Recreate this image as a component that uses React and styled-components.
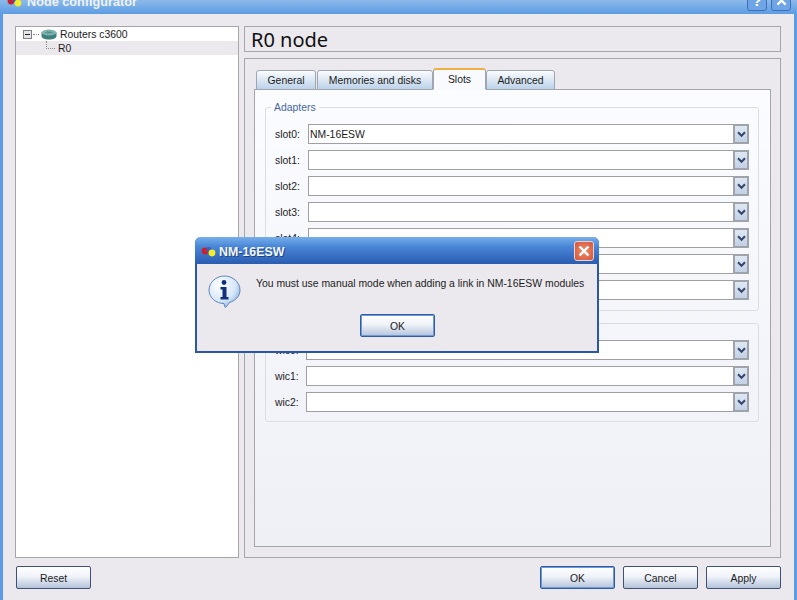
import React from 'react'
import styled, { createGlobalStyle } from 'styled-components'

const GlobalStyle = createGlobalStyle`
  html, body { margin: 0; padding: 0; background: #ebe9ed; }
  body { font-family: "Liberation Sans", Arial, sans-serif; font-size: 10.4px; color: #1c1c1c; }
`
const Window = styled.div`
  position: relative;
  width: 797px;
  height: 600px;
  overflow: hidden;
  display: flex;
  flex-direction: column;
  background: #ebe9ed;
`
const TitleBar = styled.div`
  height: 14px;
  flex: none;
  display: flex;
  align-items: flex-end;
  justify-content: space-between;
  overflow: hidden;
  padding: 0 6px 0 6px;
  background: linear-gradient(#8db9ea, #5b9ce4);
`
const TitleLeft = styled.div`
  display: flex;
  align-items: center;
  gap: 4px;
  height: 20px;
  margin-bottom: 2px;
`
const TitleText = styled.span`
  font-size: 12.7px;
  font-weight: 700;
  color: #eef3fa;
`
const TitleButtons = styled.div`
  display: flex;
  gap: 4px;
  margin-bottom: 3px;
`
const CaptionButton = styled.div`
  width: 20px;
  height: 20px;
  box-sizing: border-box;
  border: 1px solid #3f6fb5;
  border-radius: 3px;
  background: #6fa5e6;
  color: #fff;
  font-weight: bold;
  font-size: 15px;
  line-height: 18px;
  text-align: center;
`
const Frame = styled.div`
  flex: 1;
  display: flex;
  flex-direction: column;
  border-left: 3px solid #5b9ce4;
  border-right: 3px solid #5b9ce4;
  padding: 12px 13px 0 12px;
  min-height: 0;
`
const Main = styled.div`
  display: grid;
  grid-template-columns: 224px 537px;
  gap: 5px;
  height: 532px;
`
const Tree = styled.div`
  box-sizing: border-box;
  background: #fff;
  border: 1px solid #a6a6aa;
`
const TreeRow = styled.div`
  display: flex;
  align-items: center;
  height: 14px;
  padding-left: ${p => p.$indent}px;
  background: ${p => (p.$selected ? '#ebe9ed' : 'transparent')};
`
const Expander = styled.div`
  width: 9px;
  height: 9px;
  box-sizing: border-box;
  border: 1px solid #7c8088;
  background: #e6e6e6;
  display: flex;
  align-items: center;
  justify-content: center;
  &::after { content: ''; width: 5px; height: 1px; background: #222; }
`
const TreeDots = styled.div`
  width: 6px;
  border-top: 1px dotted #8a8a8a;
  margin: 0 2px 0 1px;
`
const ElbowDots = styled.div`
  width: 8px;
  height: 7px;
  margin: -7px 3px 0 0;
  border-left: 1px dotted #8a8a8a;
  border-bottom: 1px dotted #8a8a8a;
  flex: none;
`
const TreeLabel = styled.span`
  margin-left: ${p => p.$gap || 0}px;
`
const RightColumn = styled.div`
  display: flex;
  flex-direction: column;
  gap: 6px;
  min-height: 0;
`
const NodeHeading = styled.div`
  height: 26px;
  box-sizing: border-box;
  border: 1px solid #a6a6aa;
  padding-left: 6px;
  font-family: "Noto Sans", "Liberation Sans", sans-serif;
  font-size: 20px;
  line-height: 25px;
  color: #111;
`
const TabFrame = styled.div`
  flex: 1;
  box-sizing: border-box;
  border: 1px solid #a6a6aa;
  padding: 9px 9px 10px 9px;
  display: flex;
  flex-direction: column;
`
const TabBar = styled.div`
  display: flex;
  align-items: flex-end;
  height: 22px;
  padding-left: 2px;
  position: relative;
  z-index: 1;
  margin-bottom: -1px;
`
const Tab = styled.div`
  box-sizing: border-box;
  width: ${p => p.$width}px;
  height: ${p => (p.$active ? 22 : 20)}px;
  margin-right: ${p => p.$gap || 0}px;
  text-align: center;
  line-height: 19px;
  border: 1px solid #a0a6b0;
  border-radius: 3px 3px 0 0;
  background: linear-gradient(#fbfcfe, #bcd2e9);
  ${p => p.$active && `
    background: #f9fafe;
    border-top: 2px solid #eeb040;
    border-bottom: 1px solid #f9fafe;
  `}
`
const Pane = styled.div`
  flex: 1;
  box-sizing: border-box;
  border: 1px solid #a6a6aa;
  padding: 17px 11px 0 10px;
  background: linear-gradient(#fbfcff, #eff0f6);
  display: flex;
  flex-direction: column;
  gap: 12px;
`
const Group = styled.div`
  position: relative;
  box-sizing: border-box;
  border: 1px solid #dcdde3;
  border-radius: 3px;
  padding: 16px 9px ${p => p.$bottom}px 9px;
  display: flex;
  flex-direction: column;
  gap: 6px;
`
const GroupTitle = styled.span`
  position: absolute;
  top: -6px;
  left: 5px;
  padding: 0 3px;
  background: #fbfcff;
  color: #46679f;
`
const SlotRow = styled.div`
  display: flex;
  align-items: center;
  height: 20px;
`
const SlotLabel = styled.span`
  flex: none;
  width: ${p => p.$width}px;
  color: #222;
`
const Combo = styled.div`
  flex: 1;
  box-sizing: border-box;
  height: 20px;
  display: flex;
  background: #fff;
  border: 1px solid #a0a0a4;
  padding-left: 1px;
  line-height: 19px;
`
const ComboValue = styled.div`
  flex: 1;
`
const ComboArrow = styled.div`
  width: 16px;
  margin: -1px -1px -1px 0;
  box-sizing: border-box;
  border: 2px solid #a0a3aa;
  background: linear-gradient(#dfe8f4, #c2d0e6);
  display: flex;
  align-items: center;
  justify-content: center;
`
const Footer = styled.div`
  display: flex;
  align-items: flex-start;
  justify-content: space-between;
  padding: 8px 0 0 1px;
`
const ButtonRow = styled.div`
  display: flex;
  gap: 8px;
`
const Button = styled.div`
  box-sizing: border-box;
  width: 75px;
  height: 23px;
  text-align: center;
  line-height: 23px;
  border: 1px solid ${p => (p.$primary ? '#2f5da4' : '#3f5273')};
  border-radius: 2px;
  background: linear-gradient(#ffffff 0%, #f0f3f9 45%, #b4c3da 100%);
  box-shadow: ${p => (p.$primary ? 'inset 0 0 0 1px #6f9ad6' : 'none')};
`
const Dialog = styled.div`
  position: absolute;
  left: 195px;
  top: 237px;
  width: 404px;
  height: 116px;
  box-sizing: border-box;
  border: 2px solid #2b57a8;
  border-top: none;
  border-radius: 6px 6px 0 0;
  background: #ebe9ed;
  display: flex;
  flex-direction: column;
`
const DialogBar = styled.div`
  height: 27px;
  margin: 0 -2px;
  flex: none;
  box-sizing: border-box;
  display: flex;
  align-items: center;
  justify-content: space-between;
  padding: 0 5px 0 5px;
  border-radius: 6px 6px 0 0;
  background: linear-gradient(#76afe9 0%, #4a86d8 35%, #2a5cb0 100%);
`
const DialogTitle = styled.div`
  display: flex;
  align-items: center;
  gap: 2px;
  padding-top: 2px;
  color: #f4f7fc;
  font-size: 12.4px;
  font-weight: 700;
  text-shadow: 1px 1px 0 #1d4384;
`
const CloseButton = styled.div`
  width: 20px;
  height: 20px;
  box-sizing: border-box;
  border: 1px solid #e8d4d0;
  border-radius: 3px;
  background: radial-gradient(circle, #f0906c, #d4523a);
  display: flex;
  align-items: center;
  justify-content: center;
`
const DialogBody = styled.div`
  flex: 1;
  display: flex;
  flex-direction: column;
  padding: 11px 0 0 11px;
`
const MessageRow = styled.div`
  display: flex;
  height: 39px;
  gap: 15px;
  svg { flex: none; }
`
const MessageText = styled.div`
  padding-top: 3px;
  white-space: nowrap;
`
const DialogActions = styled.div`
  display: flex;
  justify-content: center;
  padding-right: 10px;
`

const Chevron = () => (
  <svg width="9" height="7" viewBox="0 0 9 7">
    <path d="M1 1.2 L4.5 4.8 L8 1.2" fill="none" stroke="#35466a" strokeWidth="2" />
  </svg>
)

const AppDots = () => (
  <svg width="17" height="12" viewBox="0 0 17 12">
    <circle cx="5" cy="5" r="3.4" fill="#c8202c" />
    <circle cx="9" cy="3.5" r="2.6" fill="#3a5fc0" />
    <circle cx="12" cy="7" r="3.4" fill="#f2ee2a" />
  </svg>
)

const RouterIcon = () => (
  <svg width="16" height="11" viewBox="0 0 16 11">
    <path d="M0.5 3.5 V7 C0.5 9 3.5 10.5 8 10.5 C12.5 10.5 15.5 9 15.5 7 V3.5 Z" fill="#3f7f7d" />
    <ellipse cx="8" cy="3.5" rx="7.5" ry="3" fill="#7fb3ae" />
    <path d="M4 3.5 H12 M6 2 L10 5 M10 2 L6 5" stroke="#4d8a88" strokeWidth="0.7" />
  </svg>
)

const InfoIcon = () => (
  <svg width="33" height="33" viewBox="0 0 33 33">
    <defs>
      <radialGradient id="bubble" cx="0.35" cy="0.3" r="0.85">
        <stop offset="0" stopColor="#ffffff" />
        <stop offset="0.6" stopColor="#d5e6f8" />
        <stop offset="1" stopColor="#6f9fd8" />
      </radialGradient>
    </defs>
    <path
      d="M16.5 1 C25 1 32 7.5 32 15 C32 21.5 27 26 21.5 27.5 L18 32 C17.5 32.5 16.8 32.3 16.7 31.6 L16 28.5 C8 28.5 1 22.8 1 15 C1 7.5 8 1 16.5 1 Z"
      fill="url(#bubble)"
      stroke="#5f86b8"
    />
    <circle cx="16" cy="7.5" r="2.4" fill="#12307a" />
    <path d="M12.5 12 H18.5 V22 H20.5 V24.5 H12.5 V22 H14.5 V14.5 H12.5 Z" fill="#12307a" />
  </svg>
)

const CloseCross = ({ size = 12 }) => (
  <svg width={size} height={size} viewBox="0 0 12 12">
    <path d="M1.5 1.5 L10.5 10.5 M10.5 1.5 L1.5 10.5" stroke="#fff" strokeWidth="2.4" />
  </svg>
)

const Slot = ({ name, value, labelWidth }) => (
  <SlotRow>
    <SlotLabel $width={labelWidth}>{name}:</SlotLabel>
    <Combo>
      <ComboValue>{value}</ComboValue>
      <ComboArrow><Chevron /></ComboArrow>
    </Combo>
  </SlotRow>
)

const slots = ['slot0', 'slot1', 'slot2', 'slot3', 'slot4', 'slot5', 'slot6']
const wics = ['wic0', 'wic1', 'wic2']

const App = () => {
  return (
    <Window>
      <GlobalStyle />
      <TitleBar>
        <TitleLeft>
          <AppDots />
          <TitleText>Node configurator</TitleText>
        </TitleLeft>
        <TitleButtons>
          <CaptionButton>?</CaptionButton>
          <CaptionButton><CloseCross size={11} /></CaptionButton>
        </TitleButtons>
      </TitleBar>
      <Frame>
        <Main>
          <Tree>
            <TreeRow $indent={7}>
              <Expander />
              <TreeDots />
              <RouterIcon />
              <TreeLabel $gap={3}>Routers c3600</TreeLabel>
            </TreeRow>
            <TreeRow $selected $indent={30}>
              <ElbowDots />
              <TreeLabel>R0</TreeLabel>
            </TreeRow>
          </Tree>
          <RightColumn>
            <NodeHeading>R0 node</NodeHeading>
            <TabFrame>
              <TabBar>
                <Tab $width={60} $gap={1}>General</Tab>
                <Tab $width={116}>Memories and disks</Tab>
                <Tab $width={53} $active>Slots</Tab>
                <Tab $width={69}>Advanced</Tab>
              </TabBar>
              <Pane>
                <Group $bottom={10}>
                  <GroupTitle>Adapters</GroupTitle>
                  {slots.map((s, i) => (
                    <Slot key={s} name={s} labelWidth={33} value={i === 0 ? 'NM-16ESW' : ''} />
                  ))}
                </Group>
                <Group $bottom={9}>
                  <GroupTitle>WICs</GroupTitle>
                  {wics.map(w => (
                    <Slot key={w} name={w} labelWidth={31} />
                  ))}
                </Group>
              </Pane>
            </TabFrame>
          </RightColumn>
        </Main>
        <Footer>
          <Button>Reset</Button>
          <ButtonRow>
            <Button $primary>OK</Button>
            <Button>Cancel</Button>
            <Button>Apply</Button>
          </ButtonRow>
        </Footer>
      </Frame>
      <Dialog>
        <DialogBar>
          <DialogTitle>
            <AppDots />
            NM-16ESW
          </DialogTitle>
          <CloseButton><CloseCross /></CloseButton>
        </DialogBar>
        <DialogBody>
          <MessageRow>
            <InfoIcon />
            <MessageText>You must use manual mode when adding a link in NM-16ESW modules</MessageText>
          </MessageRow>
          <DialogActions>
            <Button $primary>OK</Button>
          </DialogActions>
        </DialogBody>
      </Dialog>
    </Window>
  )
}

export default App
